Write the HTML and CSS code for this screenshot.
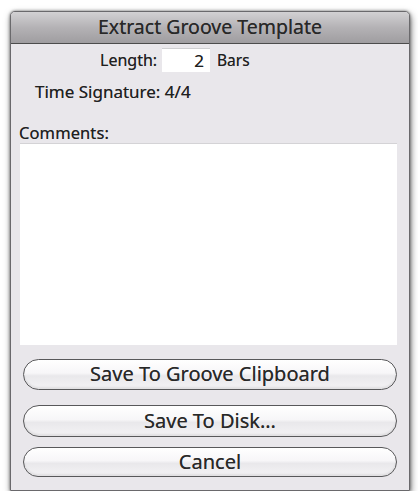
FILE: index.html
```html
<!DOCTYPE html>
<html>
<head>
<meta charset="utf-8">
<link rel="stylesheet" href="styles.css">
</head>
<body>
<div class="window">
  <div class="titlebar">Extract Groove Template</div>
  <div class="content">
    <div class="length-row">
      <span class="label">Length:</span>
      <span class="field">2</span>
      <span class="unit">Bars</span>
    </div>
    <div class="time-row">Time Signature: 4/4</div>
    <div class="comments-label">Comments:</div>
    <div class="comments-box"></div>
    <div class="buttons">
      <div class="btn btn-first">Save To Groove Clipboard</div>
      <div class="btn btn-second">Save To Disk...</div>
      <div class="btn btn-third">Cancel</div>
    </div>
  </div>
</div>
</body>
</html>
```
FILE: styles.css
```css
html, body {
  margin: 0;
  padding: 0;
  background: #ffffff;
}

body {
  font-family: "Noto Sans", "Open Sans", sans-serif;
  color: #202020;
  padding: 11px 0 0 10px;
  text-shadow: 0 0 0.6px rgba(0, 0, 0, 0.55);
}

.window {
  width: 400px;
  height: 480px;
  box-sizing: border-box;
  background: #e9e7eb;
  border: 1px solid #6a696c;
  border-radius: 5px 5px 1px 1px;
  box-shadow: 1px 3px 7px rgba(0, 0, 0, 0.55), 0 0 3px rgba(0, 0, 0, 0.5);
  display: flex;
  flex-direction: column;
}

.titlebar {
  height: 32px;
  box-sizing: border-box;
  border-bottom: 1px solid #4c4c4c;
  border-radius: 4px 4px 0 0;
  background: linear-gradient(#d2d1d3, #b4b2b5 50%, #9f9da0);
  text-align: center;
  font-size: 19.5px;
  line-height: 30px;
  color: #282828;
}

.content {
  display: flex;
  flex-direction: column;
}

.length-row {
  display: flex;
  align-items: center;
  margin: 4px 0 0 89px;
  height: 24px;
  font-size: 16px;
}

.label {
  width: 62px;
}

.field {
  width: 48px;
  height: 24px;
  box-sizing: border-box;
  background: #ffffff;
  border-top: 1px solid #cfcfd1;
  text-align: right;
  padding-right: 6px;
  line-height: 23px;
  font-size: 17px;
}

.unit {
  margin-left: 7px;
  font-size: 15.5px;
}

.time-row {
  margin: 10px 0 0 24px;
  font-size: 17px;
  line-height: 20px;
}

.comments-label {
  margin: 22px 0 0 8px;
  font-size: 16.5px;
  line-height: 18px;
  letter-spacing: 0.1px;
}

.comments-box {
  margin: 1px 0 0 9px;
  width: 377px;
  height: 202px;
  background: #ffffff;
  border-top: 1px solid #d4d3d6;
  box-sizing: border-box;
}

.buttons {
  display: flex;
  flex-direction: column;
  margin-left: 12px;
}

.btn {
  width: 374px;
  box-sizing: border-box;
  border: 1.5px solid #58585a;
  border-radius: 16px;
  background: linear-gradient(#ffffff, #f7f6f8 45%, #e9e8eb 55%, #f4f3f5);
  box-shadow: inset 0 -2px 2px rgba(0, 0, 0, 0.08);
  text-align: center;
  font-size: 20px;
  color: #282828;
}

.btn-first {
  margin-top: 14px;
  height: 31px;
  line-height: 28px;
}

.btn-second {
  margin-top: 15px;
  height: 32px;
  line-height: 29px;
}

.btn-third {
  margin-top: 10px;
  height: 30px;
  line-height: 27px;
}
```
